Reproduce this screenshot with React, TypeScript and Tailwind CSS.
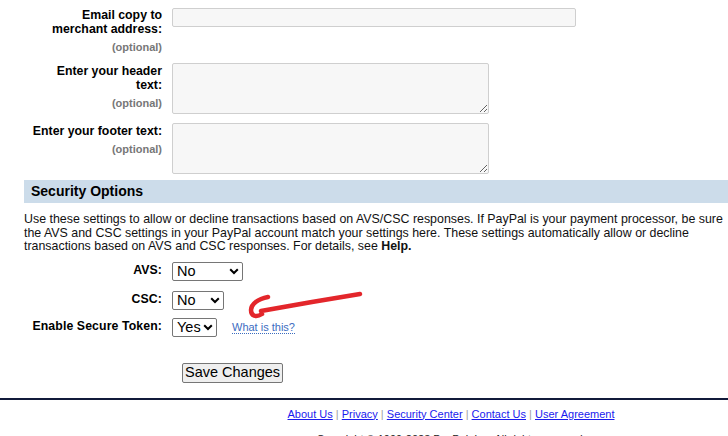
const labelCls = 'w-[140px] shrink-0 text-right text-[12.3px] font-bold leading-[14px] text-black';
const optCls = 'mt-[4px] text-[11px] font-bold leading-[14px] text-[#777]';

function Chevron() {
  return (
    <svg className="pointer-events-none absolute right-[4px] top-[6px]" width="10" height="7" viewBox="0 0 10 7">
      <path d="M1.2 1.2 L5 5 L8.8 1.2" fill="none" stroke="#000" strokeWidth="2" />
    </svg>
  );
}

function Select({ value, width }: { value: string; width: string }) {
  return (
    <div className={`relative h-[19px] ${width}`}>
      <select
        defaultValue={value}
        className="block h-[19px] w-full appearance-none rounded-[2px] border border-[#767676] bg-white pl-[4px] text-[14.5px] leading-[17px] text-black"
      >
        <option>{value}</option>
      </select>
      <Chevron />
    </div>
  );
}

export default function App() {
  return (
    <div className="h-[436px] w-[728px] overflow-hidden bg-white font-['Liberation_Sans',Arial,sans-serif] text-black">
      <div className="flex flex-col pl-[22px] pt-[8px]">
        <div className="flex gap-[10px]">
          <div className={labelCls}>
            Email copy to<br />merchant address:
            <div className={optCls}>(optional)</div>
          </div>
          <div className="h-[19px] w-[404px] rounded-[2px] border border-[#cfcfcf] bg-[#f7f7f7]" />
        </div>

        <div className="mt-[9px] flex gap-[10px]">
          <div className={`${labelCls} pt-[1px]`}>
            Enter your header<br />text:
            <div className={optCls}>(optional)</div>
          </div>
          <textarea className="block h-[51px] w-[317px] rounded-[2px] border border-[#cfcfcf] bg-[#f7f7f7]" />
        </div>

        <div className="mt-[9px] flex gap-[10px]">
          <div className={`${labelCls} pt-[1px]`}>
            Enter your footer text:
            <div className={optCls}>(optional)</div>
          </div>
          <textarea className="block h-[51px] w-[317px] rounded-[2px] border border-[#cfcfcf] bg-[#f7f7f7]" />
        </div>
      </div>

      <div className="ml-[24px] mt-[6px] h-[23px] bg-[#ccdcea] pl-[7px] text-[14px] font-bold leading-[23px] text-black">
        Security Options
      </div>

      <p className="ml-[24px] mt-[10px] text-[12.4px] leading-[13.5px] text-[#111]">
        Use these settings to allow or decline transactions based on AVS/CSC responses. If PayPal is your payment processor, be sure<br />
        the AVS and CSC settings in your PayPal account match your settings here. These settings automatically allow or decline<br />
        transactions based on AVS and CSC responses. For details, see <b>Help.</b>
      </p>

      <div className="ml-[22px] mt-[8px] flex flex-col">
        <div className="flex items-start gap-[10px]">
          <div className={`${labelCls} pt-[1px] tracking-[0.1px]`}>AVS:</div>
          <Select value="No" width="w-[71px]" />
        </div>
        <div className="mt-[10px] flex items-start gap-[10px]">
          <div className={`${labelCls} pt-[1px] tracking-[0.1px]`}>CSC:</div>
          <Select value="No" width="w-[52px]" />
        </div>
        <div className="relative mt-[8px] flex items-start gap-[10px]">
          <div className={`${labelCls} pt-[1px] tracking-[0.1px]`}>Enable Secure Token:</div>
          <Select value="Yes" width="w-[45px]" />
          <span className="ml-[5px] mt-[3px] border-b border-dotted border-[#3b6cbf] text-[11px] leading-[12px] text-[#3b6cbf]">
            What is this?
          </span>
          <svg className="pointer-events-none absolute left-[222px] top-[-31px]" width="120" height="40" viewBox="0 0 120 40">
            <path
              d="M116 7 C85 12 50 18 17 24 M24 10 C14 12 7 17 7 23 C7 29 12 31 18 27"
              fill="none"
              stroke="#e3262b"
              strokeWidth="4.5"
              strokeLinecap="round"
            />
          </svg>
        </div>
      </div>

      <div className="ml-[182px] mt-[26px]">
        <button className="block h-[20px] rounded-[2px] border border-[#767676] bg-[#efefef] px-[2px] text-[14.5px] leading-[17px] text-black">
          Save Changes
        </button>
      </div>

      <div className="mt-[15px] h-[2px] w-full bg-[#111a3a]" />

      <div className="w-[902px] text-center text-[11px] leading-[13px]">
        <div className="mt-[8px] text-[#a0a0a0]">
          <a className="text-[#1a1aee] underline">About Us</a> | <a className="text-[#1a1aee] underline">Privacy</a> |{' '}
          <a className="text-[#1a1aee] underline">Security Center</a> | <a className="text-[#1a1aee] underline">Contact Us</a> |{' '}
          <a className="text-[#1a1aee] underline">User Agreement</a>
        </div>
        <div className="mt-[12px] text-[#222]">Copyright © 1999-2023 PayPal, Inc. All rights reserved.</div>
      </div>
    </div>
  );
}
